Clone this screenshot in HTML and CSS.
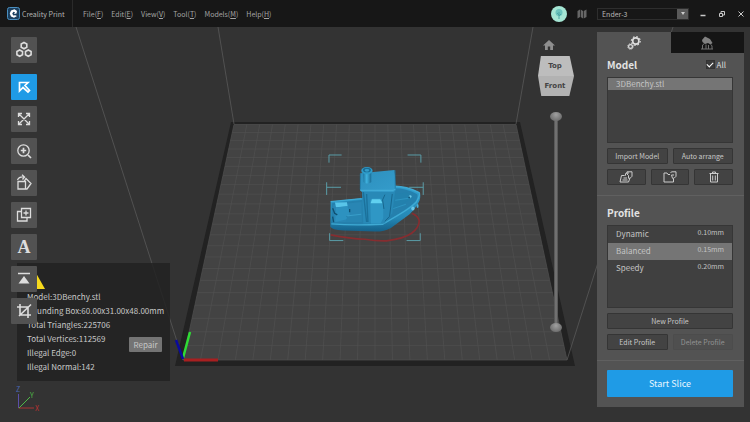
FILE: index.html
```html
<!DOCTYPE html>
<html lang="en">
<head>
    <meta charset="UTF-8">
    <meta name="viewport" content="width=device-width, initial-scale=1.0">
    <title>Creality Print</title>
    <link rel="stylesheet" href="styles.css">
</head>
<body>
    <header class="titlebar">
        <div class="brand">
            <svg class="logo" viewBox="0 0 26 26">
                <rect x="1" y="1" width="24" height="24" rx="4" fill="#1b3f5e" stroke="#4a8fc0" stroke-width="2"/>
                <path d="M20 8 L15 4.500 L8 7 L5.500 13 L8 19 L14 21.500 L20 18 L16.500 16.500 L12.500 17 L10.500 13 L13 9.500 L16 10.500 L14 14 L19 13 Z" fill="#fff"/>
            </svg>
            <span>Creality Print</span>
        </div>
        <nav class="menu">
            <button>File(<u>F</u>)</button>
            <button>Edit(<u>E</u>)</button>
            <button>View(<u>V</u>)</button>
            <button>Tool(<u>T</u>)</button>
            <button>Models(<u>M</u>)</button>
            <button>Help(<u>H</u>)</button>
        </nav>
        <div class="account">
            <button class="avatar" aria-label="Account">
                <svg viewBox="0 0 16 16">
                    <circle cx="8" cy="8" r="8" fill="#a5e6d4"/>
                    <circle cx="8" cy="6.500" r="3.500" fill="#6cc4bd"/>
                    <path d="M8 6v7M8 10l2-2M8 9L6 7" stroke="#4aa5a4" fill="none"/>
                </svg>
            </button>
            <button class="map" aria-label="Guide">
                <svg viewBox="0 0 10 10">
                    <path d="M.5 2L3 .5v7.500L.5 9.500zM3.700 .5L6 2v7.500L3.700 8zM6.700 2L9.500 .5v7.500L6.700 9.500z" fill="#666"/>
                </svg>
            </button>
        </div>
        <div class="printer">
            <select aria-label="Printer">
                <option>Ender-3</option>
            </select>
            <span class="arrow"></span>
        </div>
        <div class="window-buttons">
            <button aria-label="Minimize"><svg viewBox="0 0 8 8"><path d="M1.500 5.500h5" stroke-width="1.500"/></svg></button>
            <button aria-label="Restore"><svg viewBox="0 0 8 8"><path d="M1.500 3.500h3v3h-3zM3 3.500V1.500h3.500v3.500h-2"/></svg></button>
            <button aria-label="Close"><svg viewBox="0 0 8 8"><path d="M1.500 1.500l5 5M6.500 1.500l-5 5"/></svg></button>
        </div>
    </header>

    <main class="workspace">
        <!-- build plate and model -->
        <svg class="scene" viewBox="0 27 750 395" preserveAspectRatio="xMidYMid slice">
            <defs>
                <linearGradient id="hull" x1="0" y1="0" x2="0" y2="1">
                    <stop offset="0" stop-color="#309fcf"/>
                    <stop offset="0.700" stop-color="#2588b5"/>
                    <stop offset="1" stop-color="#14618a"/>
                </linearGradient>
                <linearGradient id="roof" x1="0" y1="0" x2="1" y2="1">
                    <stop offset="0" stop-color="#2d8fbd"/>
                    <stop offset="1" stop-color="#349ccb"/>
                </linearGradient>
                <linearGradient id="pipe">
                    <stop offset="0" stop-color="#1c749f"/>
                    <stop offset="0.450" stop-color="#3fb2df"/>
                    <stop offset="1" stop-color="#1a6c95"/>
                </linearGradient>
            </defs>
            <path d="M231 122H520L575 366H175Z" fill="#222"/>
            <path d="M234 124.500H516L567 360H183Z" fill="#434343"/>
            <path id="grid" stroke="#505050" stroke-width="0.700" fill="none"/>
            <path d="M76 27L183 360M218 27L234 124M533 27L516 124M673 27L567 360" stroke="#595959" stroke-width="0.800"/>
            <path d="M183 358L190 332" stroke="#2fdc35" stroke-width="2.500"/>
            <path d="M183 359L176 340" stroke="#0a0a9c" stroke-width="2.500"/>
            <path d="M184 360H218" stroke="#a81f20" stroke-width="3"/>

            <g transform="translate(310 140) scale(0.333)">
                <path d="M62 285Q120 297 165 298Q200 304 230 303Q285 295 305 280Q328 262 328 243Q325 228 306 220" fill="none" stroke="#862d30" stroke-width="5"/>
                <path d="M95 45H57V68M293 45H333V68M50 127V165M50 142H93M298 142H340M340 127V165M59 280V302H100M290 302H331V280" fill="none" stroke="#5a9da8" stroke-width="3"/>
                <!-- hull -->
                <path d="M62 185L155 175L255 138Q285 138 328 157Q334 164 329 182Q320 203 298 224L243 264Q225 275 195 275L100 272Q65 270 61 260Z" fill="url(#hull)"/>
                <path d="M66 190L155 180L256 145Q288 145 322 163Q325 171 317 184Q300 202 265 222L216 253Q140 257 66 252Z" fill="#2580ad"/>
                <path d="M62 185L155 176M256 139Q288 139 328 158Q332 164 319 187Q300 205 266 225L218 253Q130 257 64 252" fill="none" stroke="#3faad4" stroke-width="4"/>
                <path d="M70 195L155 186V246H72Z" fill="#2986b4"/>
                <path d="M75 188L111 187L113 199L78 202Z" fill="#59c5e9"/>
                <path d="M78 203L112 199L119 214V230L108 239L76 246Z" fill="#2d92c0"/>
                <path d="M68 205L74 220L82 225M68 230L71 247M119 207V217M111 229L118 235" stroke="#104f70" stroke-width="4" fill="none"/>
                <path d="M112 228L154 222V246H108Z" fill="#2785b2"/>
                <path d="M111 228L154 223" stroke="#389fca" stroke-width="3"/>
                <path d="M256 162L292 158L311 174L250 206Z" fill="#2381ad"/>
                <path d="M256 181L303 174M250 206L288 193" stroke="#2d95c1" stroke-width="3"/>
                <!-- cabin -->
                <path d="M156 151H256L247 220L224 251H160Z" fill="#2889b7"/>
                <path d="M160 155L170 246M170 162L174 246" stroke="#1b719b" stroke-width="4"/>
                <path d="M181 182Q183 176 188 176H211Q218 177 218 183L220 196V235L212 251H183Z" fill="#2f97c5"/>
                <path d="M182 190L186 178H211L218 190Z" fill="#60d0f0"/>
                <path d="M225 164L218 180L222 207M247 162L239 229L225 244" fill="none" stroke="#17668e" stroke-width="3"/>
                <path d="M151 100L254 90L258 150L250 156H155L150 149Z" fill="url(#roof)"/>
                <path d="M151 151H250L257 146" fill="none" stroke="#45b0da" stroke-width="3"/>
                <path d="M256 91V148M151 101V148" stroke="#1b719c" stroke-width="2"/>
                <!-- chimney -->
                <path d="M159 92H184V127Q171 135 161 127Z" fill="url(#pipe)"/>
                <ellipse cx="171" cy="92" rx="17" ry="11" fill="#2e9cca"/>
                <ellipse cx="171" cy="90" rx="12" ry="7" fill="#196b94"/>
                <ellipse cx="171" cy="91" rx="7" ry="4" fill="#329dca"/>
                <circle cx="301" cy="170" r="4" fill="#6bc9e8"/>
                <circle cx="298" cy="173" r="3" fill="#135a7e"/>
                <ellipse cx="309" cy="206" rx="5" ry="6" fill="#68c6e8"/>
                <ellipse cx="323" cy="198" rx="3" ry="6" fill="#4db0d8"/>
            </g>
        </svg>

        <section class="info">
            <svg class="warning" viewBox="0 0 18 16"><path d="M9 0L18 16H0Z" fill="#f6d91c"/></svg>
            <ul>
                <li>Model:3DBenchy.stl</li>
                <li>Bounding Box:60.00x31.00x48.00mm</li>
                <li>Total Triangles:225706</li>
                <li>Total Vertices:112569</li>
                <li>Illegal Edge:0</li>
                <li>Illegal Normal:142</li>
            </ul>
            <button class="repair">Repair</button>
        </section>

        <aside class="toolbar">
            <button aria-label="Models">
                <svg viewBox="0 0 18 18"><path d="M9 1.500l2.800 1.500v3.200L9 7.800 6.200 6.200V3zM4.700 9l2.800 1.500v3.200l-2.800 1.600-2.800-1.600v-3.200zM13.300 9l2.800 1.500v3.200l-2.800 1.600-2.800-1.600v-3.200z" stroke-width="1.600"/></svg>
            </button>
            <button class="selected" aria-label="Select">
                <svg viewBox="0 0 18 18"><path d="M4.500 13V4.500H13L10 7.500 14.500 12.500 13 14 8 9.500z" fill="none" stroke-width="1.700"/></svg>
            </button>
            <button aria-label="Scale">
                <svg viewBox="0 0 18 18"><path d="M4 4l10 10M14 4L4 14M3.500 7V3.500H7M11 3.500h3.500V7M14.500 11v3.500H11M7 14.500H3.500V11"/></svg>
            </button>
            <button aria-label="Zoom">
                <svg viewBox="0 0 18 18"><circle cx="8.500" cy="8.500" r="5.700"/><path d="M13 13l3 3M5.800 8.500h5.400M8.500 5.800v5.400" stroke-width="1.700"/></svg>
            </button>
            <button aria-label="Rotate">
                <svg viewBox="0 0 18 18"><path d="M3 7.500h7.500v7.500H3zM10.500 15h1.500l4-5.500L11 4.500 9 7.500M2.500 6Q4 2.500 9 3M7 .8L9.500 3 7.500 5.500"/></svg>
            </button>
            <button aria-label="Clone">
                <svg viewBox="0 0 18 18"><path d="M6.500 2.500h9v9h-9zM6 5.500H2.500V15H12v-3M11 4.500v5M8.500 7h5" /></svg>
            </button>
            <button class="letter" aria-label="Text">A</button>
            <button aria-label="Place on top">
                <svg viewBox="0 0 18 18"><path d="M3 3.500h12" stroke-width="1.500"/><path class="solid" d="M9 6l5.500 7.500h-11z"/></svg>
            </button>
            <button aria-label="Cut">
                <svg viewBox="0 0 18 18"><path d="M5 2v11h11M2 5h11v11M4 14L16 2.500" stroke-width="1.600"/></svg>
            </button>
        </aside>

        <svg class="axes" viewBox="0 0 26 28">
            <path d="M3.500 22V8" stroke="#5a4fa8"/>
            <path d="M3.500 22H19" stroke="#a93434"/>
            <path d="M4 22L15 11" stroke="#4fb848"/>
            <text x="1" y="6" fill="#4a66b0">Z</text>
            <text x="15" y="12" fill="#4fb848">Y</text>
            <text x="20" y="25" fill="#b93232">X</text>
        </svg>

        <div class="view">
            <button class="home" aria-label="Home view">
                <svg viewBox="0 0 12 10"><path d="M6 0l6 5.500h-2V10H7.200V6.500H4.800V10H2V5.500H0z" fill="#8e8e8e"/></svg>
            </button>
            <div class="cube">
                <button>Top</button>
                <button>Front</button>
            </div>
            <div class="layers">
                <input type="range" min="0" max="100" value="0" aria-label="Top layer">
                <input type="range" min="0" max="100" value="100" aria-label="Bottom layer">
            </div>
        </div>

        <aside class="panel">
            <div class="tabs">
                <button class="active" aria-label="Settings">
                    <svg viewBox="0 0 14 14">
                        <circle cx="8.800" cy="5" r="3.100" stroke="#ddd" stroke-width="1.600" fill="none"/>
                        <circle cx="8.800" cy="5" r="4.400" stroke="#ddd" stroke-width="1.200" stroke-dasharray="1.600 1.850" fill="none"/>
                        <circle cx="3.500" cy="10.500" r="1.900" stroke="#ddd" stroke-width="1.200" fill="none"/>
                        <circle cx="3.500" cy="10.500" r="2.800" stroke="#ddd" stroke-dasharray="1.100 1.100" fill="none"/>
                    </svg>
                </button>
                <button aria-label="Supports">
                    <svg viewBox="0 0 14 14">
                        <path d="M2 4l3-3.500L10 3l2.500 4-2 1.500L8 7 5 8 2.500 6z" fill="#808080"/>
                        <path d="M1 13h12M2.500 13V9l2-1.500M6 13V8.500M8.500 13V9M11 8.500l1 1.500v3" stroke="#707070" fill="none"/>
                    </svg>
                </button>
            </div>

            <section class="group">
                <div class="group-title">
                    <h2>Model</h2>
                    <label><input type="checkbox" checked>All</label>
                </div>
                <ul class="list models">
                    <li class="current">3DBenchy.stl</li>
                </ul>
                <div class="row">
                    <button>Import Model</button>
                    <button>Auto arrange</button>
                </div>
                <div class="row">
                    <button aria-label="Save model">
                        <svg viewBox="0 0 14 12"><path d="M1 11l1.500-6.500h3M1 11h8.500l1.500-4M3.500 9h5M4.500 7h3.500M6 5l1-3h3M8 .8h5v4.500l-2 2H9.500V4.500L8 3z"/></svg>
                    </button>
                    <button aria-label="Open folder">
                        <svg viewBox="0 0 14 12"><path d="M7 3.500H5L4 2H1v9h9.500V8M7.500 1.500L9 .8h4v4.500l-2 2H9.500L8.500 4H11"/></svg>
                    </button>
                    <button aria-label="Delete model">
                        <svg viewBox="0 0 14 12"><path d="M2.500 2.500h9M5.500 2V1h3v1M3.500 3v8h7V3M5.700 4.500v5M8.300 4.500v5"/></svg>
                    </button>
                </div>
            </section>

            <section class="group">
                <div class="group-title">
                    <h2>Profile</h2>
                </div>
                <ul class="list profiles">
                    <li>Dynamic<span>0.10mm</span></li>
                    <li class="current">Balanced<span>0.15mm</span></li>
                    <li>Speedy<span>0.20mm</span></li>
                </ul>
                <div class="row">
                    <button>New Profile</button>
                </div>
                <div class="row">
                    <button>Edit Profile</button>
                    <button disabled>Delete Profile</button>
                </div>
            </section>

            <section class="group">
                <button class="slice">Start Slice</button>
            </section>
        </aside>
    </main>

    <script>
        const cells = 22;
        const front = { left: 183, right: 567, y: 360 };
        const back = { left: 234, right: 516, y: 124.5 };

        // perspective depth, so rows get closer together towards the back
        const depth = (front.right - front.left) / (back.right - back.left) - 1;
        const scale = (front.y - back.y) / (1 - 1 / (1 + depth));

        let d = '';
        for (let i = 0; i <= cells; i++) {
            const t = i / cells;
            const xf = front.left + (front.right - front.left) * t;
            const xb = back.left + (back.right - back.left) * t;
            d += `M${xf} ${front.y}L${xb} ${back.y}`;

            const y = front.y - scale + scale / (1 + depth * t);
            const k = (front.y - y) / (front.y - back.y);
            const xl = front.left + (back.left - front.left) * k;
            const xr = front.right + (back.right - front.right) * k;
            d += `M${xl} ${y}H${xr}`;
        }
        document.getElementById('grid').setAttribute('d', d);
    </script>
</body>
</html>
```

FILE: styles.css
```css
:root {
    --bar: #171717;
    --stage: #333;
    --panel: #535353;
    --well: #404040;
    --current: #757575;
    --text: #c8c8c8;
    --accent: #1f9be6;
}

* {
    box-sizing: border-box;
}

body {
    margin: 0;
    min-height: 100vh;
    display: flex;
    flex-direction: column;
    background: var(--stage);
    color: var(--text);
    font-family: "Noto Sans CJK SC", "Noto Sans", sans-serif;
    font-size: 8px;
    line-height: 12px;
}

button,
select,
input {
    margin: 0;
    padding: 0;
    border: none;
    background: none;
    color: inherit;
    font: inherit;
}

svg {
    display: block;
}

ul {
    margin: 0;
    padding: 0;
    list-style: none;
}

/* title bar */

.titlebar {
    height: 27px;
    display: flex;
    align-items: center;
    background: var(--bar);
    color: #b4b4b4;
    font-size: 7px;
}

.brand {
    width: 73px;
    height: 100%;
    padding-left: 7px;
    display: flex;
    align-items: center;
    gap: 2px;
    border-right: 1px solid #2a2a2a;
    white-space: nowrap;
}

.logo {
    width: 13px;
    height: 13px;
}

.menu {
    flex: 1;
    display: flex;
    gap: 8px;
    padding-left: 10px;
    color: #a4a4a4;
}

.account {
    display: flex;
    align-items: center;
    gap: 10px;
    margin-right: 10px;
}

.avatar svg {
    width: 16px;
    height: 16px;
}

.map svg {
    width: 10px;
    height: 10px;
}

.printer {
    width: 92px;
    height: 12px;
    display: flex;
    border: 1px solid #2e2e2e;
}

.printer select {
    flex: 1;
    padding-left: 4px;
    appearance: none;
    line-height: 10px;
    color: #b8b8b8;
}

.arrow {
    width: 11px;
    display: flex;
    align-items: center;
    justify-content: center;
    background: #5a5a5a;
}

.arrow::after {
    content: "";
    border: 2px solid transparent;
    border-top: 3px solid #ccc;
    border-bottom: none;
}

.window-buttons {
    display: flex;
    gap: 11px;
    padding: 0 5px 0 10px;
}

.window-buttons svg {
    width: 8px;
    height: 8px;
    fill: none;
    stroke: #c8c8c8;
}

/* workspace */

.workspace {
    position: relative;
    flex: 1;
    display: flex;
    align-items: flex-start;
    padding: 5px 6px 15px 11px;
}

.scene {
    position: absolute;
    inset: 0;
    width: 100%;
    height: 100%;
}

.toolbar {
    position: relative;
    display: flex;
    flex-direction: column;
    gap: 6px;
    padding-top: 5px;
}

.toolbar button {
    width: 26px;
    height: 26px;
    display: flex;
    align-items: center;
    justify-content: center;
    border-radius: 1px;
    background: #525252;
    color: #ddd;
}

.toolbar button:first-child {
    margin-bottom: 5px;
}

.toolbar .selected {
    background: var(--accent);
    color: #fff;
}

.toolbar svg {
    width: 18px;
    height: 18px;
    fill: none;
    stroke: currentColor;
    stroke-width: 1.3;
}

.toolbar .solid {
    fill: currentColor;
    stroke: none;
}

.toolbar .letter {
    font-family: "Liberation Serif", serif;
    font-size: 18px;
    font-weight: bold;
}

.info {
    position: absolute;
    left: 17px;
    bottom: 41px;
    width: 153px;
    padding: 10px 10px 7px;
    background: rgba(34, 34, 34, 0.85);
    line-height: 14px;
    white-space: nowrap;
}

.warning {
    width: 18px;
    height: 16px;
    margin-bottom: 1px;
}

.repair {
    position: absolute;
    right: 8px;
    bottom: 29px;
    width: 33px;
    height: 15px;
    border-radius: 1px;
    background: #747474;
    line-height: 15px;
}

.axes {
    position: absolute;
    left: 15px;
    bottom: 8px;
    width: 26px;
    height: 28px;
    overflow: visible;
    font-size: 7px;
}

.view {
    position: relative;
    width: 36px;
    margin-left: auto;
    margin-right: 23px;
    padding-top: 8px;
    display: flex;
    flex-direction: column;
}

.home {
    align-self: flex-start;
    margin-left: 5px;
}

.home svg {
    width: 12px;
    height: 10px;
}

.cube {
    height: 40px;
    margin-top: 6px;
    display: flex;
    flex-direction: column;
    clip-path: polygon(8% 0, 88% 0, 100% 50%, 87% 100%, 9% 100%, 0 50%);
}

.cube button {
    flex: 1;
    padding-right: 2px;
    background: #bdbdbd;
    color: #444;
    font-family: "DejaVu Sans", sans-serif;
    font-size: 7px;
    font-weight: bold;
}

.cube button:last-child {
    background: #b2b2b2;
}

.layers {
    position: relative;
    width: 12px;
    height: 220px;
    margin: 16px auto 0;
    background: linear-gradient(90deg, #4e4e4e, #7c7c7c, #4e4e4e) center / 4px 210px no-repeat;
}

.layers input {
    position: absolute;
    inset: 0;
    width: 100%;
    height: 100%;
    appearance: none;
    writing-mode: vertical-lr;
    pointer-events: none;
}

.layers input::-webkit-slider-thumb {
    appearance: none;
    width: 12px;
    height: 9px;
    border-radius: 50%;
    background: radial-gradient(circle at 50% 30%, #a0a0a0, #5c5c5c);
    pointer-events: auto;
}

/* side panel */

.panel {
    position: relative;
    width: 147px;
    background: var(--panel);
}

.tabs {
    display: flex;
    padding-bottom: 4px;
}

.tabs button {
    flex: 1;
    height: 21px;
    display: flex;
    align-items: center;
    justify-content: center;
    background: #151515;
}

.tabs .active {
    background: var(--panel);
}

.tabs svg {
    width: 14px;
    height: 14px;
}

.group {
    padding: 0 11px 10px 10px;
    display: flex;
    flex-direction: column;
    gap: 5px;
}

.group + .group {
    padding-top: 9px;
    border-top: 1px solid #606060;
}

.group-title {
    display: flex;
    align-items: center;
    justify-content: space-between;
    padding-right: 7px;
}

h2 {
    margin: 0;
    color: #e2e2e2;
    font-size: 10px;
    font-weight: bold;
    line-height: 15px;
}

label {
    display: flex;
    align-items: center;
    gap: 2px;
    color: #ddd;
}

label input {
    width: 9px;
    height: 9px;
    display: flex;
    align-items: center;
    justify-content: center;
    appearance: none;
    border: 1px solid #333;
    background: #3a3a3a;
}

label input:checked::after {
    content: "";
    width: 5px;
    height: 3px;
    margin-bottom: 2px;
    border: solid #fff;
    border-width: 0 0 1px 1px;
    transform: rotate(-45deg);
}

.list {
    border: 1px solid #363636;
    background: var(--well);
}

.list li {
    padding: 0 8px;
    color: #c4c4c4;
}

.list .current {
    background: var(--current);
}

.models {
    height: 66px;
}

.profiles {
    height: 83px;
}

.profiles li {
    height: 17px;
    display: flex;
    justify-content: space-between;
    line-height: 16px;
}

.profiles span {
    font-size: 7px;
    line-height: 12px;
}

.row {
    display: flex;
    gap: 5px;
}

.row button {
    flex: 1;
    height: 16px;
    display: flex;
    align-items: center;
    justify-content: center;
    border: 1px solid #353535;
    border-radius: 1px;
    background: #434343;
    font-size: 7px;
    white-space: nowrap;
}

.row button:disabled {
    border-color: #4c4c4c;
    background: #4f4f4f;
    color: #929292;
}

.row svg {
    width: 14px;
    height: 12px;
    fill: none;
    stroke: #ccc;
}

.slice {
    height: 27px;
    border-radius: 1px;
    background: var(--accent);
    color: #e8f6ff;
    font-size: 9px;
}
```
